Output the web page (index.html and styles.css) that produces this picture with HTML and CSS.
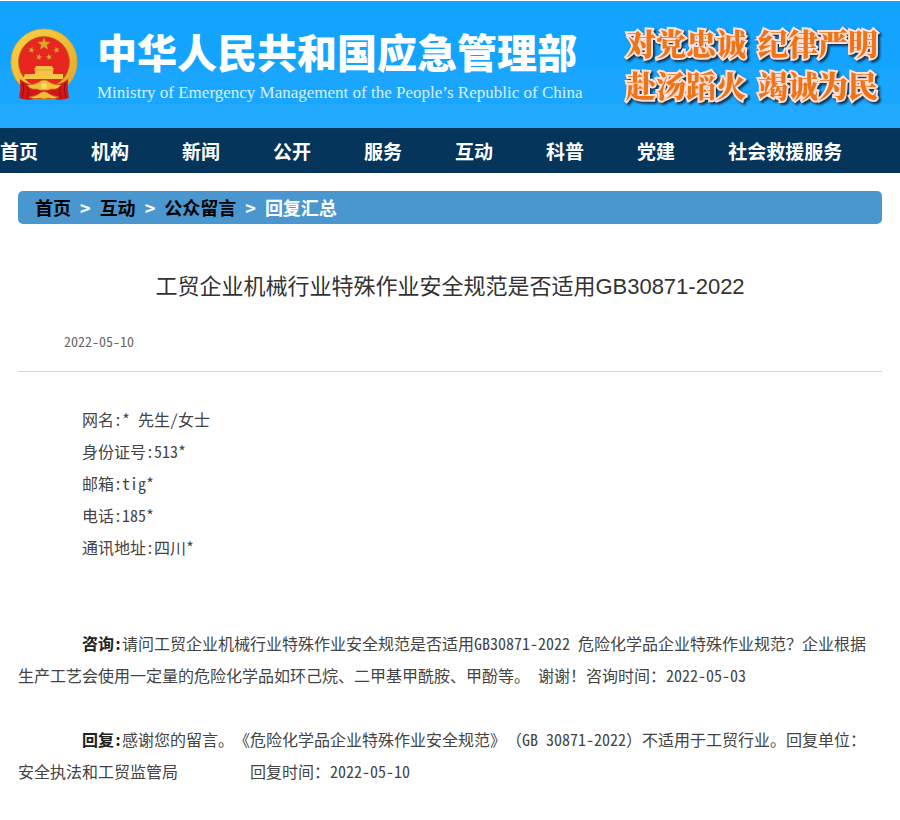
FILE: index.html
```html
<!DOCTYPE html>
<html lang="zh-CN">
<head>
<meta charset="utf-8">
<meta name="viewport" content="width=device-width, initial-scale=1">
<title>工贸企业机械行业特殊作业安全规范是否适用GB30871-2022</title>
<link rel="stylesheet" href="styles.css">
</head>
<body>
<header class="banner">
  <svg class="emblem" viewBox="0 0 68 74" aria-hidden="true">
    <defs>
      <linearGradient id="gold" x1="0" y1="0" x2="1" y2="1">
        <stop offset="0" stop-color="#fbd04a"/>
        <stop offset=".5" stop-color="#f3bd35"/>
        <stop offset="1" stop-color="#dba32c"/>
      </linearGradient>
      <path id="star" d="M0-7 1.700-2.200 6.700-2.100 2.800.9 4.200 5.800 0 3-4.200 5.800-2.800.9-6.700-2.100-1.700-2.200Z"/>
    </defs>
    <circle cx="34" cy="34" r="33" fill="url(#gold)" stroke="#e0a82c"/>
    <circle cx="34" cy="34" r="25.500" fill="#e8261f" stroke="#a97420" stroke-width=".8"/>
    <g fill="#e0a52e" stroke="#a8601c" stroke-width=".3">
      <use href="#star" x="34" y="16"/>
      <use href="#star" transform="translate(21.500 22) scale(.5) rotate(15)"/>
      <use href="#star" transform="translate(46.500 22) scale(.5) rotate(-15)"/>
      <use href="#star" transform="translate(29 29) scale(.5) rotate(15)"/>
      <use href="#star" transform="translate(39 29) scale(.5) rotate(-15)"/>
    </g>
    <path d="M26 38h16l2 4H24ZM25 42h18v4H25ZM15 46h38v5H13Z" fill="#f7c545"/>
    <path d="M24 42h20" stroke="#d9962b" stroke-width=".7"/>
    <path d="M10 51q5 5 14 6v14q-7 2-15-1 2-9 1-19ZM58 51q-5 5-14 6v14q7 2 15-1-2-9-1-19Z" fill="#d31618"/>
    <path d="M13 55q2 7-1 15M18 58q1 7-1 13M55 55q-2 7 1 15M50 58q-1 7 1 13" fill="none" stroke="#950c12"/>
    <path d="M24 57h20v14H24Z" fill="#d31618"/>
    <path d="M17 57q8 0 12-3 5-4 10 0 4 3 12 3-3 5-10 4-3 2-7 1-4 1-7-1-7 1-10-4ZM19 69q8-1 11-4 4-3 8 0 3 3 11 4-5 3-11 1-4 2-8 0-6 2-11-1Z" fill="#f3bd35" stroke="#b97620" stroke-width=".6"/>
    <circle cx="34" cy="58" r="3" fill="#fbd766"/>
  </svg>
  <div class="brand">
    <div class="brand-name">中华人民共和国应急管理部</div>
    <div class="brand-sub">Ministry of Emergency Management of the People’s Republic of China</div>
  </div>
  <div class="slogan">
    <div class="slogan-row"><span>对党忠诚</span><span>纪律严明</span></div>
    <div class="slogan-row"><span>赴汤蹈火</span><span>竭诚为民</span></div>
  </div>
</header>

<nav class="main-nav">
  <a href="#">首页</a>
  <a href="#">机构</a>
  <a href="#">新闻</a>
  <a href="#">公开</a>
  <a href="#">服务</a>
  <a href="#">互动</a>
  <a href="#">科普</a>
  <a href="#">党建</a>
  <a href="#">社会救援服务</a>
</nav>

<main class="content">
  <nav class="crumbs">
    <a href="#">首页</a><span>&gt;</span>
    <a href="#">互动</a><span>&gt;</span>
    <a href="#">公众留言</a><span>&gt;</span>
    <span>回复汇总</span>
  </nav>

  <article>
    <h1 class="title">工贸企业机械行业特殊作业安全规范是否适用GB30871-2022</h1>
    <div class="meta"><time datetime="2022-05-10">2022-05-10</time></div>

    <div class="body">
      <p>网名:* 先生/女士</p>
      <p>身份证号:513*</p>
      <p>邮箱:tig*</p>
      <p>电话:185*</p>
      <p>通讯地址:四川*</p>

      <p class="question"><b>咨询:</b>请问工贸企业机械行业特殊作业安全规范是否适用GB30871-2022 危险化学品企业特殊作业规范？企业根据<br>生产工艺会使用一定量的危险化学品如环己烷、二甲基甲酰胺、甲酚等。 谢谢！咨询时间：2022-05-03</p>

      <p class="answer"><b>回复:</b>感谢您的留言。《危险化学品企业特殊作业安全规范》（GB 30871-2022）不适用于工贸行业。回复单位：<br>安全执法和工贸监管局<span class="reply-time">回复时间：2022-05-10</span></p>
    </div>
  </article>
</main>
</body>
</html>
```
FILE: styles.css
```css
* {
  box-sizing: border-box;
}

body {
  margin: 0;
  padding-top: 1px;
  background: #fff;
  color: #333;
  font-family: "Liberation Sans", "Noto Sans CJK SC", sans-serif;
  text-spacing-trim: space-all;
}

a {
  color: inherit;
  text-decoration: none;
}

.banner {
  display: flex;
  align-items: flex-start;
  padding: 22px 22px 21px 10px;
  background: linear-gradient(#13a4ff 0 67px, #1aa6ff 67px 103px, #22aaff 103px);
}

.emblem {
  flex: none;
  width: 68px;
  height: 74px;
  margin-top: 5px;
}

.brand {
  margin-left: 19px;
  color: #fff;
  white-space: nowrap;
}

.brand-name {
  font: 900 40px/56px "Noto Sans CJK SC", sans-serif;
}

.brand-sub {
  font: 17px/28px "Liberation Serif", serif;
  color: #d9f0ff;
}

.slogan {
  margin-left: auto;
  color: #ee741a;
  font: 900 30px/38px "Noto Serif CJK SC", "Noto Sans CJK SC", serif;
  -webkit-text-stroke: 4px #ffe0d8;
  paint-order: stroke fill;
  filter: drop-shadow(2px 2px 1px #0f3450);
  white-space: nowrap;
}

.slogan-row {
  display: flex;
  gap: 12px;
  padding-bottom: 4px;
}

.main-nav {
  display: flex;
  gap: 53px;
  background: #05355a;
  color: #fff;
  font: bold 19px/45px "Noto Sans CJK SC", sans-serif;
  white-space: nowrap;
}

.content {
  padding: 18px;
}

.crumbs {
  display: flex;
  gap: 9px;
  padding: 0 17px;
  border-radius: 5px;
  background: #4a97d0;
  color: #fff;
  font: bold 18px/33px "Noto Sans CJK SC", sans-serif;
}

.crumbs a {
  color: #000;
}

.title {
  margin: 40px 0 0;
  font-size: 22px;
  font-weight: 400;
  line-height: 46px;
  text-align: center;
}

.meta {
  margin-top: 18px;
  padding: 0 46px 16px;
  border-bottom: 1px solid #d6d6d6;
  color: #666;
  font: 14px/27px "Noto Sans Mono CJK SC", "Liberation Mono", monospace;
}

.body {
  padding-top: 31px;
  color: #444;
  font: 16px/32px "Noto Sans Mono CJK SC", "Noto Sans CJK SC", monospace;
}

.body p {
  margin: 0;
  text-indent: 4em;
}

.body b {
  color: #222;
}

.body .question {
  margin-top: 64px;
}

.body .answer {
  margin-top: 32px;
}

.reply-time {
  margin-left: 72px;
}
```
